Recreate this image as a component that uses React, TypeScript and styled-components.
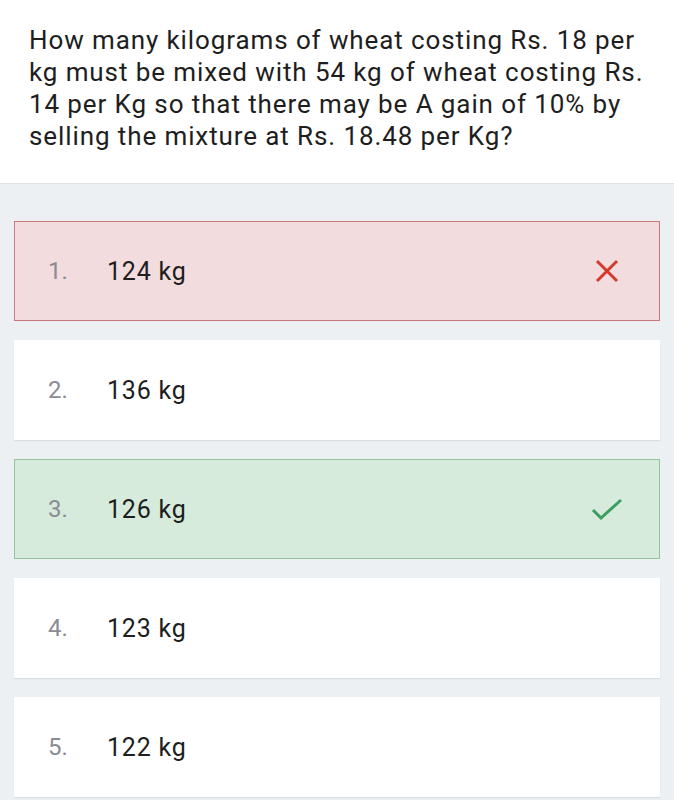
import styled, { createGlobalStyle } from 'styled-components';

const GlobalStyle = createGlobalStyle`
  html, body {
    margin: 0;
    padding: 0;
    background: #edf0f3;
    font-family: Roboto, "Liberation Sans", Arial, sans-serif;
  }
`;

type OptionState = 'wrong' | 'right' | 'none';

interface Option {
  label: string;
  state: OptionState;
}

const OPTIONS: Option[] = [
  { label: '124 kg', state: 'wrong' },
  { label: '136 kg', state: 'none' },
  { label: '126 kg', state: 'right' },
  { label: '123 kg', state: 'none' },
  { label: '122 kg', state: 'none' },
];

const Page = styled.div`
  min-height: 800px;
  background: #edf0f3;
`;

const QuestionBox = styled.div`
  background: #fff;
  border-bottom: 1px solid #dfe2e6;
  padding: 24px 20px 27px 29px;
  height: 132px;
`;

const QuestionText = styled.p`
  margin: 0;
  font-size: 26px;
  line-height: 32px;
  color: #1e1e1e;
  letter-spacing: 0.9px;
`;

const List = styled.div`
  display: flex;
  flex-direction: column;
  gap: 19px;
  padding: 37px 14px 0 14px;
`;

const CARD_BG: Record<OptionState, string> = {
  wrong: '#f3dcdd',
  right: '#d6ebdb',
  none: '#ffffff',
};

const CARD_BORDER: Record<OptionState, string> = {
  wrong: '#c9797b',
  right: '#94c49c',
  none: '#ffffff',
};

const Card = styled.div<{ $state: OptionState }>`
  display: flex;
  align-items: center;
  height: 100px;
  box-sizing: border-box;
  background: ${({ $state }) => CARD_BG[$state]};
  border: 1px solid ${({ $state }) => CARD_BORDER[$state]};
  box-shadow: ${({ $state }) => ($state === 'none' ? '0 1px 1px rgba(0,0,0,0.08)' : 'none')};
  padding: 0 36px 0 33px;
`;

const Num = styled.span`
  width: 59px;
  font-size: 24px;
  color: #8b8b93;
`;

const Label = styled.span`
  flex: 1;
  font-size: 25px;
  color: #1e1e1e;
  letter-spacing: 0.8px;
`;

const IconWrap = styled.span`
  display: flex;
  align-items: center;
  justify-content: center;
  width: 32px;
  height: 32px;
`;

function WrongIcon() {
  return (
    <svg width="26" height="26" viewBox="0 0 26 26">
      <path d="M3 3 L23 23 M23 3 L3 23" stroke="#d23a2d" strokeWidth="3" strokeLinecap="butt" />
    </svg>
  );
}

function RightIcon() {
  return (
    <svg width="32" height="24" viewBox="0 0 32 24">
      <path d="M2 13 L10 21 L30 3" stroke="#3d9d61" strokeWidth="3" fill="none" />
    </svg>
  );
}

export default function App() {
  return (
    <Page>
      <GlobalStyle />
      <QuestionBox>
        <QuestionText>
          How many kilograms of wheat costing Rs. 18 per kg must be mixed with 54 kg of wheat costing
          Rs. 14 per Kg so that there may be A gain of 10% by selling the mixture at Rs. 18.48 per Kg?
        </QuestionText>
      </QuestionBox>
      <List>
        {OPTIONS.map((opt, i) => (
          <Card key={i} $state={opt.state}>
            <Num>{i + 1}.</Num>
            <Label>{opt.label}</Label>
            <IconWrap>
              {opt.state === 'wrong' && <WrongIcon />}
              {opt.state === 'right' && <RightIcon />}
            </IconWrap>
          </Card>
        ))}
      </List>
    </Page>
  );
}
